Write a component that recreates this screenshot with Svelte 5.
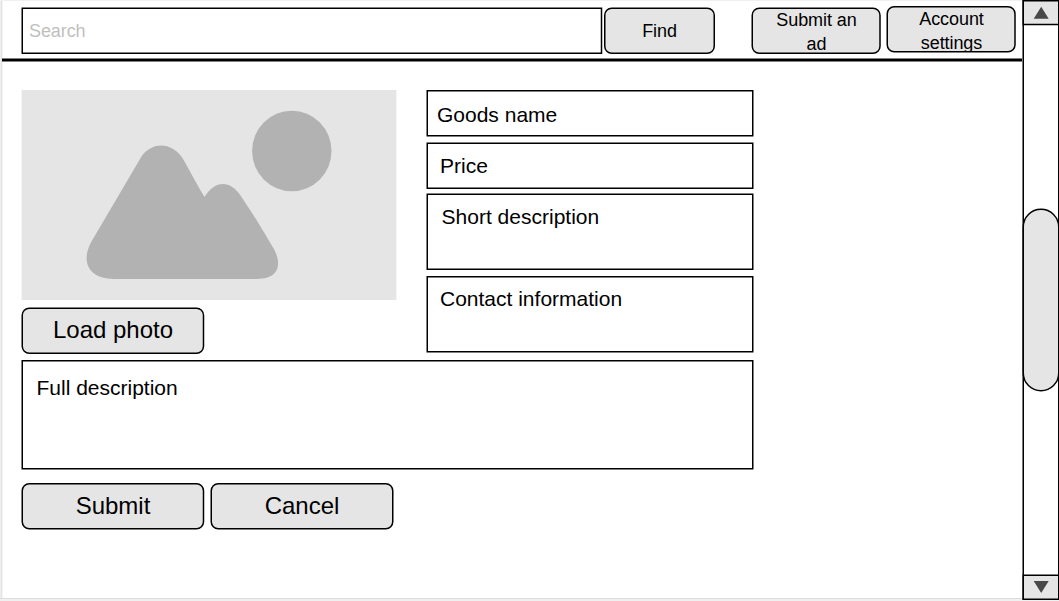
<script>
  const fields = [
    { label: 'Goods name', w: 325.5, h: 45, dy: 0.75, cls: 'goods' },
    { label: 'Price', w: 325.5, h: 45, dy: 0.25, cls: 'price' },
    { label: 'Short description', w: 325.5, h: 75, dy: 0.25, cls: 'short' },
    { label: 'Contact information', w: 325.5, h: 75, dy: 0.75, cls: 'contact' }
  ];
</script>

{#snippet frame(w, h, dx, dy, r, fill)}
  <svg class="frame" aria-hidden="true">
    <rect x={dx} y={dy} width={w} height={h} rx={r} {fill} stroke="#000" stroke-width="1.5" />
  </svg>
{/snippet}

<div class="screen">
  <main class="page">
    <header>
      <div class="box search">
        {@render frame(579.25, 45, 0.25, 0.25, 0, '#fff')}
        <span>Search</span>
      </div>
      <div class="box button find">
        {@render frame(109.5, 45, 0.75, 0.25, 7, '#e5e5e5')}
        <span>Find</span>
      </div>
      <div class="box button two ad">
        {@render frame(127.75, 45, 0.25, 0.25, 7, '#e5e5e5')}
        <span>Submit an<br />ad</span>
      </div>
      <div class="box button two account">
        {@render frame(127.75, 45, 0.25, 0.75, 7, '#e5e5e5')}
        <span>Account<br />settings</span>
      </div>
    </header>
    <svg class="rule" aria-hidden="true"><rect y="0.5" width="1020" height="3" /></svg>

    <section class="form">
      <div class="top">
        <div class="media">
          <svg class="photo" viewBox="0 0 376 210" aria-hidden="true">
            <rect x="0.6" width="374.8" height="210" fill="#e5e5e5" />
            <g fill="#b2b2b2">
              <ellipse cx="270.8" cy="61" rx="39.7" ry="40.2" />
              <path d="M119 69C129 51 151 51 162 69C168 79 173 89.500 183.500 107C194 90 209 90 219.500 105.500C230 121 237 132 253.500 160C260.500 174 258.500 189 236 189H93C67 189 59.500 171 70.500 151.500Z" />
            </g>
          </svg>
          <div class="box button large load">
            {@render frame(181.25, 45, 0.25, 0.25, 7, '#e5e5e5')}
            <span>Load photo</span>
          </div>
        </div>
        <div class="fields">
          {#each fields as f}
            <div class="box field {f.cls}">
              {@render frame(f.w, f.h, 0.25, f.dy, 0, '#fff')}
              <span>{f.label}</span>
            </div>
          {/each}
        </div>
      </div>
      <div class="box field full">
        {@render frame(730.5, 108, 0.25, 0.75, 0, '#fff')}
        <span>Full description</span>
      </div>
      <div class="actions">
        <div class="box button large">
          {@render frame(181.25, 45, 0.25, 0.75, 7, '#e5e5e5')}
          <span>Submit</span>
        </div>
        <div class="box button large">
          {@render frame(181.5, 45, 0.25, 0.75, 7, '#e5e5e5')}
          <span>Cancel</span>
        </div>
      </div>
    </section>
  </main>

  <svg class="scrollbar" viewBox="0 0 37 601" aria-hidden="true">
    <g fill="#e5e5e5" stroke="#000" stroke-width="1.5">
      <rect x="1.25" y="0.75" width="35.5" height="598.5" fill="#fff" />
      <rect x="1.25" y="0.75" width="35.5" height="23.75" />
      <rect x="1.25" y="575.25" width="35.5" height="24" />
      <rect x="1.25" y="209.25" width="35.5" height="181.5" rx="17.75" />
    </g>
    <path d="M19.200 6.700L26.700 18.700H11.700ZM11.700 581H26.700L19.200 593Z" fill="#484848" />
  </svg>
</div>

<style>
  :global(body) {
    margin: 0;
    background: #f0f0f0;
    overflow: hidden;
  }
  .screen {
    width: 1059px;
    height: 601px;
    display: flex;
    font-family: 'Liberation Sans', Arial, sans-serif;
    color: #000;
  }
  .page {
    box-sizing: border-box;
    width: 1022px;
    height: 598px;
    margin-top: 1px;
    padding-left: 1px;
    border-bottom: 1px solid #dcdcdc;
    background: linear-gradient(90deg, #f0f0f0 1px, #e2e2e2 1px, #e2e2e2 2px, #f6f6f6 2px, #f6f6f6 3px, #fff 3px);
  }
  .scrollbar {
    width: 37px;
    height: 601px;
    flex: none;
  }
  header {
    display: flex;
    height: 57px;
    padding-left: 21px;
  }
  .box {
    position: relative;
    box-sizing: border-box;
    flex: none;
  }
  .frame {
    position: absolute;
    inset: 0;
    width: 100%;
    height: 100%;
    overflow: visible;
  }
  .box span {
    position: relative;
    display: block;
    white-space: nowrap;
  }
  header .box {
    height: 46px;
    margin-top: 7px;
    font-size: 18px;
    line-height: 24px;
    letter-spacing: -0.08px;
  }
  .search {
    width: 580px;
    padding: 11px 0 0 7px;
    color: #bfbfbf;
  }
  .button {
    text-align: center;
  }
  .find {
    width: 111px;
    margin-left: 2px;
    padding-top: 11px;
  }
  .ad {
    width: 129px;
    margin-left: 37px;
  }
  header .account {
    width: 129px;
    margin: 5px 0 0 6px;
    padding-top: 1px;
  }
  .two span {
    height: 45px;
    overflow: hidden;
  }
  .account span {
    height: 44px;
  }
  .rule {
    display: block;
    width: 1020px;
    height: 4px;
    margin-left: 1px;
  }
  .form {
    padding: 28px 0 0 20px;
  }
  .top {
    display: flex;
    height: 270px;
  }
  .media {
    width: 376px;
  }
  .photo {
    display: block;
    width: 376px;
    height: 210px;
  }
  .large {
    width: 182px;
    height: 46px;
    padding-top: 8px;
    font-size: 24px;
    line-height: 28px;
  }
  .load {
    margin: 8px 0 0 1px;
  }
  .fields {
    margin-left: 30px;
  }
  .field {
    width: 326px;
    font-size: 21px;
    line-height: 24px;
  }
  .goods {
    height: 46px;
    padding: 13px 0 0 10px;
  }
  .price {
    height: 46px;
    margin-top: 7px;
    padding: 11px 0 0 13px;
  }
  .short {
    height: 76px;
    margin-top: 5px;
    padding: 11px 0 0 14.6px;
  }
  .contact {
    height: 76px;
    margin-top: 6px;
    padding: 11px 0 0 13px;
  }
  .full {
    width: 731px;
    height: 109px;
    margin-left: 1px;
    padding: 16px 0 0 14.5px;
  }
  .actions {
    display: flex;
    gap: 7px;
    margin: 14px 0 0 1px;
  }
  .actions .large {
    padding-top: 9px;
  }
</style>
